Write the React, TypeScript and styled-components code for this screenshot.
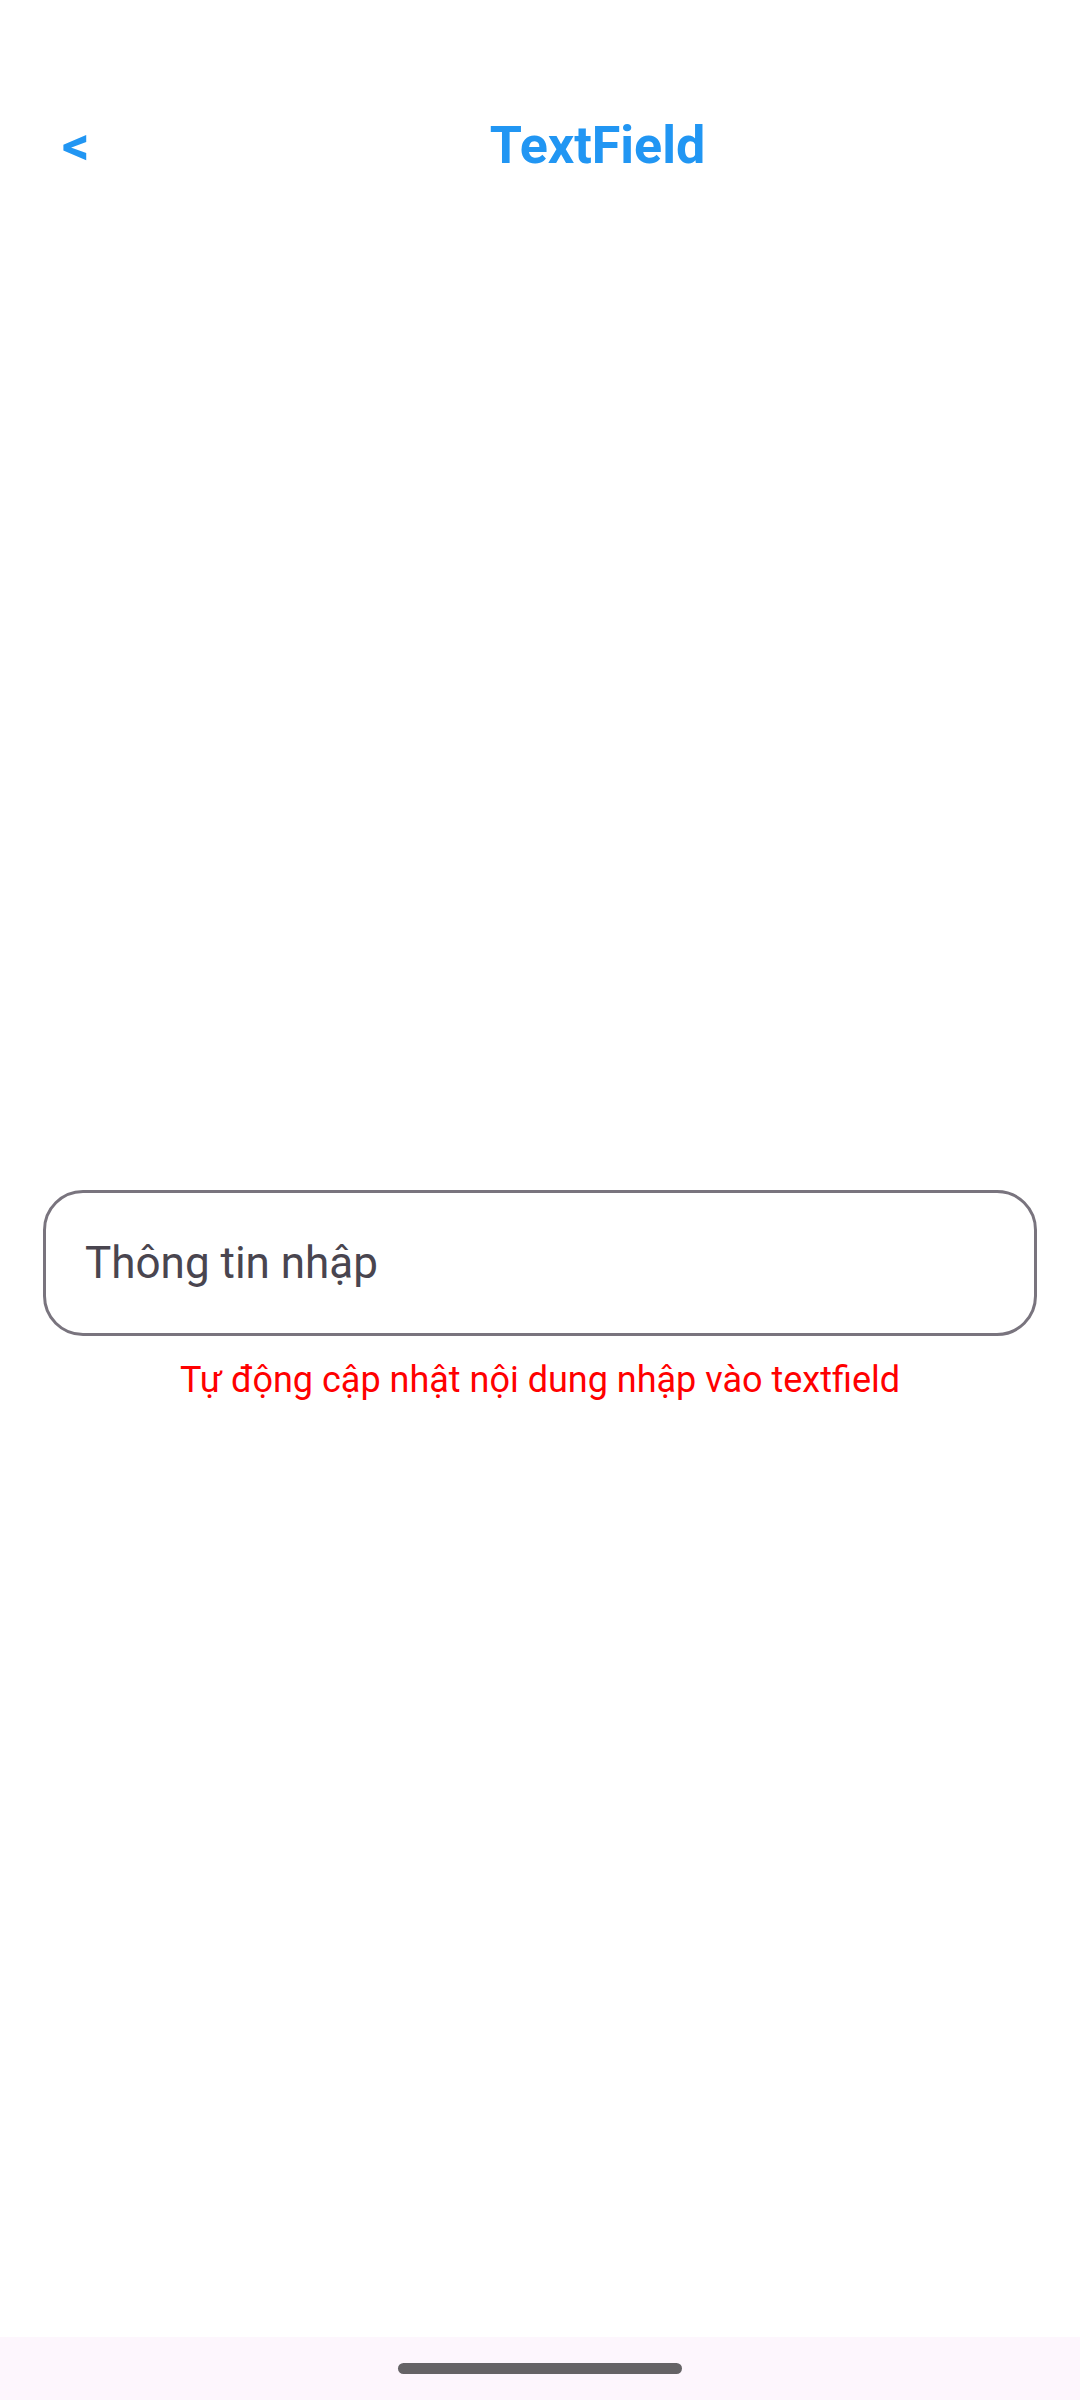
import React from 'react';
import styled, { createGlobalStyle } from 'styled-components';

const GlobalStyle = createGlobalStyle`
  html, body {
    margin: 0;
    padding: 0;
    background: #ffffff;
    font-family: Roboto, "Noto Sans", "Liberation Sans", sans-serif;
  }
  * {
    box-sizing: border-box;
  }
`;

const Screen = styled.div`
  width: 1080px;
  min-height: 2400px;
  display: flex;
  flex-direction: column;
  background: #ffffff;
`;

const Header = styled.header`
  display: flex;
  align-items: center;
  height: 100px;
  margin-top: 95px;
`;

const BackButton = styled.button`
  width: 115px;
  height: 100%;
  padding: 0 0 0 62px;
  border: none;
  background: transparent;
  text-align: left;
  font-family: Roboto, sans-serif;
  font-size: 54px;
  font-weight: 700;
  color: #2196f3;
  cursor: pointer;
`;

const Title = styled.h1`
  flex: 1;
  margin: 0;
  text-align: center;
  font-size: 52px;
  font-weight: 700;
  color: #2196f3;
`;

const Main = styled.main`
  flex: 1;
  display: flex;
  flex-direction: column;
  justify-content: center;
  padding: 60px 43px 0;
`;

const Field = styled.input`
  width: 100%;
  height: 146px;
  padding: 0 39px;
  border: 3px solid #79747e;
  border-radius: 40px;
  outline: none;
  background: transparent;
  font-family: Roboto, sans-serif;
  font-size: 44px;
  color: #1d1b20;

  &::placeholder {
    color: #49454f;
  }
`;

const Helper = styled.p`
  margin: 22px 0 0;
  text-align: center;
  font-size: 36px;
  line-height: 44px;
  color: #ff0000;
`;

const NavBar = styled.div`
  height: 63px;
  display: flex;
  align-items: center;
  justify-content: center;
  background: #fdf6fd;
`;

const Handle = styled.div`
  width: 284px;
  height: 11px;
  border-radius: 6px;
  background: #656366;
`;

export default function App() {
  return (
    <>
      <GlobalStyle />
      <Screen>
        <Header>
          <BackButton>&lt;</BackButton>
          <Title>TextField</Title>
        </Header>
        <Main>
          <Field placeholder="Thông tin nhập" />
          <Helper>Tự động cập nhật nội dung nhập vào textfield</Helper>
        </Main>
        <NavBar>
          <Handle />
        </NavBar>
      </Screen>
    </>
  );
}
